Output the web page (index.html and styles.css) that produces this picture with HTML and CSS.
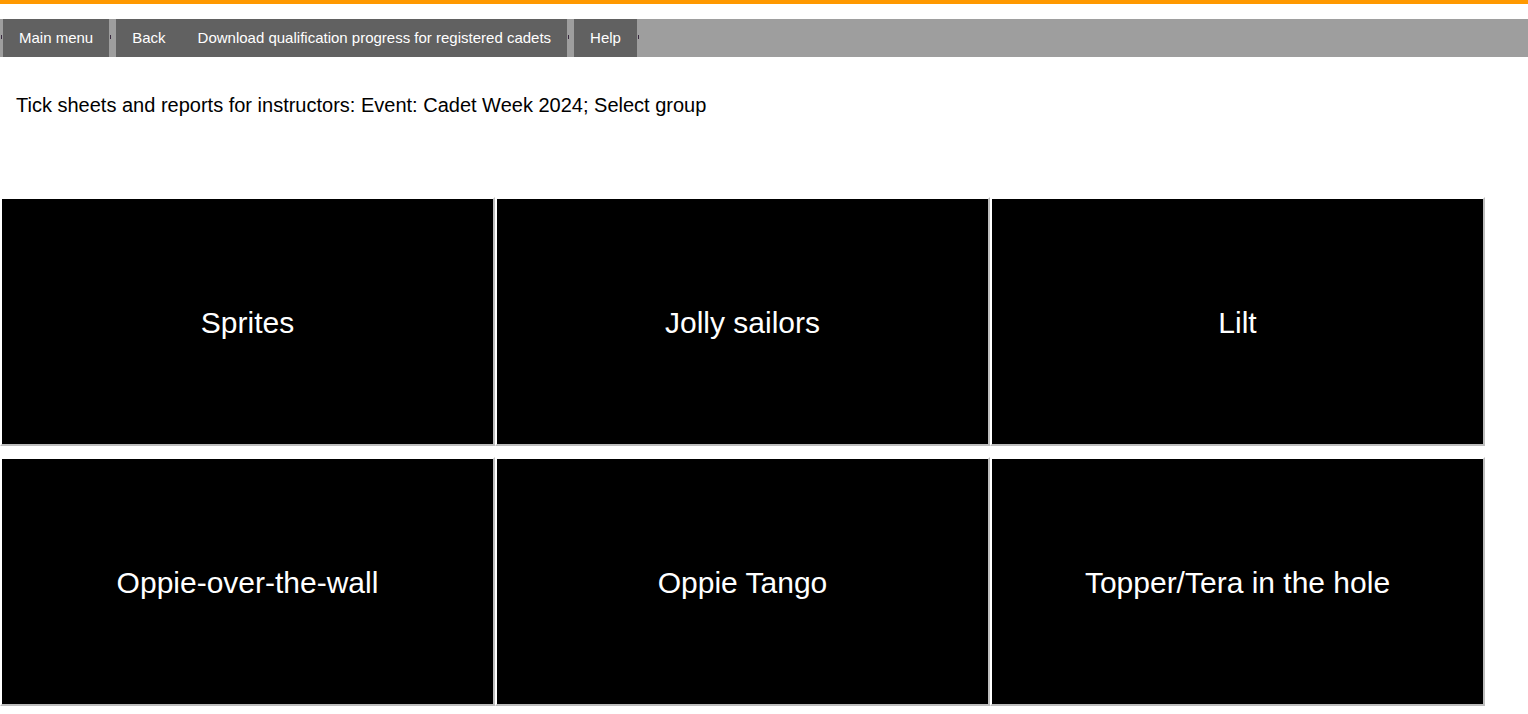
FILE: index.html
```html
<!DOCTYPE html>
<html>
<head>
<meta charset="utf-8">
<link rel="stylesheet" href="styles.css">
</head>
<body>
<div class="topbar"></div>
<nav class="nav">
  <span class="tick"></span>
  <a class="btn">Main menu</a>
  <span class="tick"></span>
  <a class="btn">Back</a>
  <a class="btn">Download qualification progress for registered cadets</a>
  <span class="tick"></span>
  <a class="btn">Help</a>
  <span class="tick"></span>
</nav>
<h1 class="title">Tick sheets and reports for instructors: Event: Cadet Week 2024; Select group</h1>
<div class="grid">
  <div class="tile">Sprites</div>
  <div class="tile">Jolly sailors</div>
  <div class="tile">Lilt</div>
  <div class="tile">Oppie-over-the-wall</div>
  <div class="tile">Oppie Tango</div>
  <div class="tile">Topper/Tera in the hole</div>
</div>
</body>
</html>
```

FILE: styles.css
```css
html, body {
  margin: 0;
  padding: 0;
  background: #ffffff;
  font-family: "Liberation Sans", Arial, sans-serif;
}
.topbar {
  height: 4px;
  background: #ff9900;
}
.nav {
  margin-top: 15px;
  height: 38px;
  background: #9e9e9e;
  display: flex;
  align-items: stretch;
}
.tick {
  width: 7px;
  position: relative;
  flex: none;
}
.tick::after {
  content: "";
  position: absolute;
  left: 1px;
  top: 16px;
  width: 1px;
  height: 4px;
  background: #3a2a40;
}
.nav > .tick:first-child {
  width: 3px;
}
.btn {
  display: flex;
  align-items: center;
  padding: 0 16px 2px 16px;
  background: #616161;
  color: #ffffff;
  font-size: 15px;
  white-space: nowrap;
}
.title {
  margin: 0;
  padding: 36px 16px 0 16px;
  height: 102px;
  box-sizing: border-box;
  font-weight: normal;
  font-size: 20px;
  color: #000000;
  line-height: 24px;
}
.grid {
  display: grid;
  grid-template-columns: repeat(3, 495px);
  row-gap: 11px;
  margin-top: 38px;
}
.tile {
  height: 249px;
  box-sizing: border-box;
  padding-top: 3px;
  border: 2px solid;
  border-color: #ffffff #bdbdbd #bdbdbd #ffffff;
  background: #000000;
  color: #ffffff;
  font-size: 30px;
  display: flex;
  align-items: center;
  justify-content: center;
}
```
